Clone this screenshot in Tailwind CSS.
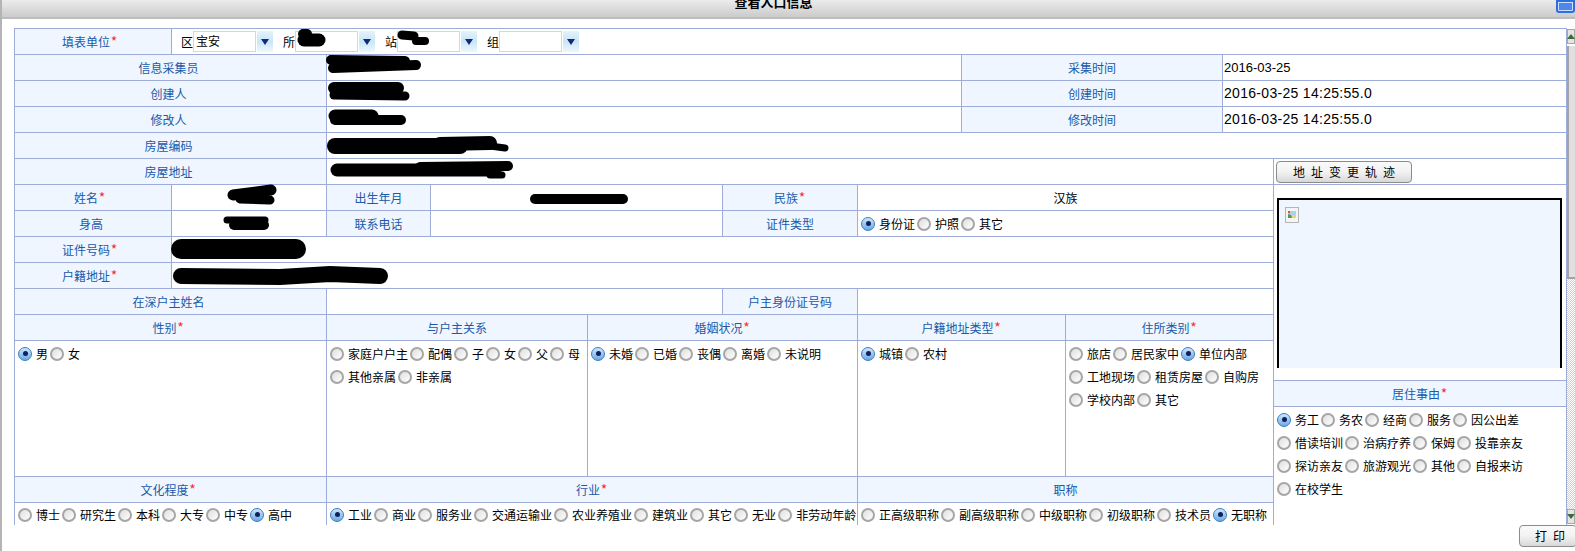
<!doctype html>
<html>

<head>
  <meta charset="UTF-8">
  <title>查看人口信息</title>
  <script src="https://cdn.jsdelivr.net/npm/@tailwindcss/browser@4"></script>
</head>

<body class="relative h-[551px] overflow-hidden bg-white text-xs text-black font-['Noto_Sans_CJK_SC','Noto_Sans_CJK_TC',sans-serif]">

  <!-- title bar -->
  <div class="relative h-[19px] ml-[2px] overflow-hidden border-b-2 border-[#bcbcbc] bg-gradient-to-b from-[#ececec] to-[#cbcbcb]">
    <p class="-mt-[5px] text-center text-[13px] leading-[14px] font-bold pr-[30px]">查看人口信息</p>
    <div class="absolute right-0 top-0 w-[19px] h-[13px] border-2 border-[#2b6fdc] rounded-b-[3px] bg-[#4d86ef] shadow-[inset_0_0_0_1px_#cfe0ff]"></div>
  </div>

  <!-- page edge on the left -->
  <div class="absolute left-0 top-0 w-[2px] h-full bg-[#b4b4b4]"></div>

  <div class="flex pt-[9px] pl-[14px]">
    <div class="w-[1553px] h-[497px] overflow-hidden">
      <table class="table-fixed w-[1552px] [&_td]:border [&_td]:border-[#9dacd8]">
        <colgroup>
          <col class="w-[157px]"><col class="w-[155px]"><col class="w-[104px]"><col class="w-[157px]"><col class="w-[135px]"><col class="w-[135px]"><col class="w-[104px]"><col class="w-[104px]"><col class="w-[157px]"><col class="w-[51px]"><col class="w-[293px]">
        </colgroup>
        <tr class="h-[26px]">
          <td class="bg-[#eff6ff] text-[#2059a8] text-center pr-[6px]">填表单位<span class="inline-block w-[8px] text-[14px] leading-none text-red-500">*</span></td>
          <td colspan="10">
            <div class="flex pl-[9px] gap-[10px] items-center">
              <div class="flex items-center">
                <span class="w-3">区</span>
                <span class="w-[63px] h-[21px] border border-[#c6dcec] pl-[2px] leading-[17px]">宝安</span>
                <span class="flex justify-center items-center w-[16px] h-[21px] ml-px bg-gradient-to-b from-[#e4f2fb] via-[#c8e6f8] to-[#eef8fd]"><span class="w-0 h-0 border-x-[4px] border-x-transparent border-t-[6px] border-t-[#0f2a80]"></span></span>
              </div>
              <div class="flex items-center">
                <span class="w-3">所</span>
                <span class="w-[63px] h-[21px] border border-[#c6dcec]"></span>
                <span class="flex justify-center items-center w-[16px] h-[21px] ml-px bg-gradient-to-b from-[#e4f2fb] via-[#c8e6f8] to-[#eef8fd]"><span class="w-0 h-0 border-x-[4px] border-x-transparent border-t-[6px] border-t-[#0f2a80]"></span></span>
              </div>
              <div class="flex items-center">
                <span class="w-3">站</span>
                <span class="w-[63px] h-[21px] border border-[#c6dcec]"></span>
                <span class="flex justify-center items-center w-[16px] h-[21px] ml-px bg-gradient-to-b from-[#e4f2fb] via-[#c8e6f8] to-[#eef8fd]"><span class="w-0 h-0 border-x-[4px] border-x-transparent border-t-[6px] border-t-[#0f2a80]"></span></span>
              </div>
              <div class="flex items-center">
                <span class="w-3">组</span>
                <span class="w-[63px] h-[21px] border border-[#c6dcec]"></span>
                <span class="flex justify-center items-center w-[16px] h-[21px] ml-px bg-gradient-to-b from-[#e4f2fb] via-[#c8e6f8] to-[#eef8fd]"><span class="w-0 h-0 border-x-[4px] border-x-transparent border-t-[6px] border-t-[#0f2a80]"></span></span>
              </div>
            </div>
          </td>
        </tr>
        <tr class="h-[26px]">
          <td colspan="2" class="bg-[#eff6ff] text-[#2059a8] text-center pr-[4px]">信息采集员</td>
          <td colspan="5"></td>
          <td colspan="2" class="bg-[#eff6ff] text-[#2059a8] text-center">采集时间</td>
          <td colspan="2" class="pl-[1px] font-['Liberation_Sans',sans-serif] text-[13px]">2016-03-25</td>
        </tr>
        <tr class="h-[26px]">
          <td colspan="2" class="bg-[#eff6ff] text-[#2059a8] text-center pr-[4px]">创建人</td>
          <td colspan="5"></td>
          <td colspan="2" class="bg-[#eff6ff] text-[#2059a8] text-center">创建时间</td>
          <td colspan="2" class="pl-[1px] font-['Liberation_Sans',sans-serif] text-[14px] tracking-[0.3px]">2016-03-25 14:25:55.0</td>
        </tr>
        <tr class="h-[26px]">
          <td colspan="2" class="bg-[#eff6ff] text-[#2059a8] text-center pr-[4px]">修改人</td>
          <td colspan="5"></td>
          <td colspan="2" class="bg-[#eff6ff] text-[#2059a8] text-center">修改时间</td>
          <td colspan="2" class="pl-[1px] font-['Liberation_Sans',sans-serif] text-[14px] tracking-[0.3px]">2016-03-25 14:25:55.0</td>
        </tr>
        <tr class="h-[26px]">
          <td colspan="2" class="bg-[#eff6ff] text-[#2059a8] text-center pr-[4px]">房屋编码</td>
          <td colspan="9"></td>
        </tr>
        <tr class="h-[26px]">
          <td colspan="2" class="bg-[#eff6ff] text-[#2059a8] text-center pr-[4px]">房屋地址</td>
          <td colspan="8"></td>
          <td class="pl-[2px]">
            <button class="block w-[136px] h-[22px] border border-[#8c8c8c] rounded-[4px] bg-gradient-to-b from-[#fafafa] via-[#f2f2f2] to-[#d8d8d8] leading-[20px] text-center [word-spacing:3.3px]">地 址 变 更 轨 迹</button>
          </td>
        </tr>
        <tr class="h-[26px]">
          <td class="bg-[#eff6ff] text-[#2059a8] text-center pr-[6px]">姓名<span class="inline-block w-[8px] text-[14px] leading-none text-red-500">*</span></td>
          <td></td>
          <td class="bg-[#eff6ff] text-[#2059a8] text-center">出生年月</td>
          <td colspan="2"></td>
          <td class="bg-[#eff6ff] text-[#2059a8] text-center">民族<span class="inline-block w-[8px] text-[14px] leading-none text-red-500">*</span></td>
          <td colspan="4" class="text-center">汉族</td>
          <td rowspan="7" class="align-top pt-[13px] pl-[3px]">
            <div class="w-[285px] h-[170px] border-2 border-b-0 border-black bg-[#eff6ff] pt-[7px] pl-[6px]">
              <svg width="14" height="16" viewBox="0 0 14 16" class="block">
                <rect x="0.5" y="0.5" width="13" height="15" fill="#f4f4f4" stroke="#b5b5b5"/>
                <rect x="3" y="4" width="8" height="7" fill="#a8d0f0"/>
                <path d="M3 11 L3 7 L6 8 L7 11 Z" fill="#4f9a4f"/>
                <rect x="7" y="8" width="4" height="3" fill="#f0d070"/>
                <rect x="3" y="4" width="2" height="2" fill="#d9582e"/>
              </svg>
            </div>
          </td>
        </tr>
        <tr class="h-[26px]">
          <td class="bg-[#eff6ff] text-[#2059a8] text-center pr-[4px]">身高</td>
          <td></td>
          <td class="bg-[#eff6ff] text-[#2059a8] text-center">联系电话</td>
          <td colspan="2"></td>
          <td class="bg-[#eff6ff] text-[#2059a8] text-center">证件类型</td>
          <td colspan="4" class="px-[3px]"><div data-opts="身份证*,护照,其它" class="flex"></div></td>
        </tr>
        <tr class="h-[26px]">
          <td class="bg-[#eff6ff] text-[#2059a8] text-center pr-[6px]">证件号码<span class="inline-block w-[8px] text-[14px] leading-none text-red-500">*</span></td>
          <td colspan="9"></td>
        </tr>
        <tr class="h-[26px]">
          <td class="bg-[#eff6ff] text-[#2059a8] text-center pr-[6px]">户籍地址<span class="inline-block w-[8px] text-[14px] leading-none text-red-500">*</span></td>
          <td colspan="9"></td>
        </tr>
        <tr class="h-[26px]">
          <td colspan="2" class="bg-[#eff6ff] text-[#2059a8] text-center pr-[4px]">在深户主姓名</td>
          <td colspan="3"></td>
          <td class="bg-[#eff6ff] text-[#2059a8] text-center">户主身份证号码</td>
          <td colspan="4"></td>
        </tr>
        <tr class="h-[26px]">
          <td colspan="2" class="bg-[#eff6ff] text-[#2059a8] text-center pr-[4px]">性别<span class="inline-block w-[8px] text-[14px] leading-none text-red-500">*</span></td>
          <td colspan="2" class="bg-[#eff6ff] text-[#2059a8] text-center">与户主关系</td>
          <td colspan="2" class="bg-[#eff6ff] text-[#2059a8] text-center">婚姻状况<span class="inline-block w-[8px] text-[14px] leading-none text-red-500">*</span></td>
          <td colspan="2" class="bg-[#eff6ff] text-[#2059a8] text-center">户籍地址类型<span class="inline-block w-[8px] text-[14px] leading-none text-red-500">*</span></td>
          <td colspan="2" class="bg-[#eff6ff] text-[#2059a8] text-center">住所类别<span class="inline-block w-[8px] text-[14px] leading-none text-red-500">*</span></td>
        </tr>
        <tr class="h-[40px]">
          <td rowspan="3" colspan="2" class="align-top px-[3px] pt-[1px]"><div data-opts="男*,女" class="flex flex-wrap"></div></td>
          <td rowspan="3" colspan="2" class="align-top px-[3px] pt-[1px]"><div data-opts="家庭户户主,配偶,子,女,父,母,其他亲属,非亲属" class="flex flex-wrap"></div></td>
          <td rowspan="3" colspan="2" class="align-top px-[3px] pt-[1px]"><div data-opts="未婚*,已婚,丧偶,离婚,未说明" class="flex flex-wrap"></div></td>
          <td rowspan="3" colspan="2" class="align-top px-[3px] pt-[1px]"><div data-opts="城镇*,农村" class="flex flex-wrap"></div></td>
          <td rowspan="3" colspan="2" class="align-top px-[3px] pt-[1px]"><div data-opts="旅店,居民家中,单位内部*,工地现场,租赁房屋,自购房,学校内部,其它" class="flex flex-wrap"></div></td>
        </tr>
        <tr class="h-[26px]">
          <td class="bg-[#eff6ff] text-[#2059a8] text-center">居住事由<span class="inline-block w-[8px] text-[14px] leading-none text-red-500">*</span></td>
        </tr>
        <tr class="h-[70px]">
          <td rowspan="3" class="align-top px-[3px] pt-[1px]"><div data-opts="务工*,务农,经商,服务,因公出差,借读培训,治病疗养,保姆,投靠亲友,探访亲友,旅游观光,其他,自报来访,在校学生" class="flex flex-wrap"></div></td>
        </tr>
        <tr class="h-[26px]">
          <td colspan="2" class="bg-[#eff6ff] text-[#2059a8] text-center pr-[4px]">文化程度<span class="inline-block w-[8px] text-[14px] leading-none text-red-500">*</span></td>
          <td colspan="4" class="bg-[#eff6ff] text-[#2059a8] text-center">行业<span class="inline-block w-[8px] text-[14px] leading-none text-red-500">*</span></td>
          <td colspan="4" class="bg-[#eff6ff] text-[#2059a8] text-center">职称</td>
        </tr>
        <tr class="h-[26px]">
          <td colspan="2" class="align-top px-[3px]"><div data-opts="博士,研究生,本科,大专,中专,高中*" class="flex"></div></td>
          <td colspan="4" class="align-top px-[3px]"><div data-opts="工业*,商业,服务业,交通运输业,农业养殖业,建筑业,其它,无业,非劳动年龄" class="flex"></div></td>
          <td colspan="4" class="align-top px-[3px]"><div data-opts="正高级职称,副高级职称,中级职称,初级职称,技术员,无职称*" class="flex"></div></td>
        </tr>
      </table>
    </div>

    <!-- scrollbar, cut off by the window edge -->
    <div class="w-[8px] h-[495px] mt-px flex flex-col overflow-hidden">
      <div class="flex justify-center items-center h-[15px] border border-[#a8a8a8] bg-[#e4e4e4]"><span class="w-0 h-0 border-x-[4px] border-x-transparent border-b-[5px] border-b-[#3c6b3c]"></span></div>
      <div class="h-[233px] mt-[2px] border-l-2 border-b-2 border-[#a4a4a8] bg-[#e0e0e0]"></div>
      <div class="flex-1 bg-[repeating-conic-gradient(#d0d0d0_0_25%,#ffffff_0_50%)] bg-[length:2px_2px]"></div>
      <div class="flex justify-center items-center h-[15px] border border-[#a8a8a8] bg-[#e4e4e4]"><span class="w-0 h-0 border-x-[4px] border-x-transparent border-t-[5px] border-t-[#3c6b3c]"></span></div>
    </div>
  </div>

  <div class="flex justify-end">
    <button class="w-[58px] h-[22px] -mr-[2px] pl-[4px] border border-[#8c8c8c] rounded-[4px] bg-gradient-to-b from-[#fafafa] via-[#f2f2f2] to-[#d8d8d8] leading-[20px] text-center [word-spacing:3.3px]">打 印</button>
  </div>

  <!-- scribbled-out personal data lying over the table -->
  <svg class="absolute left-0 top-0 pointer-events-none" width="1575" height="551" fill="none" stroke="#000" stroke-linecap="round">
    <path stroke-width="10" d="M303 34 L307 34"/>
    <path stroke-width="13" d="M304 40 L319 40"/>
    <path stroke-width="9" d="M402 35 L414 36"/>
    <path stroke-width="8" d="M416 41 L425 41"/>
    <path stroke-width="10" d="M331 60 L405 61"/>
    <path stroke-width="10" d="M333 68 L416 65"/>
    <path stroke-width="12" d="M334 88 L398 88"/>
    <path stroke-width="9" d="M334 95 L405 96"/>
    <path stroke-width="13" d="M335 116 L372 116"/>
    <path stroke-width="10" d="M335 120 L401 120"/>
    <path stroke-width="16" d="M335 146 L460 146"/>
    <path stroke-width="14" d="M440 144 L490 143"/>
    <path stroke-width="7" d="M490 146 L505 148"/>
    <path stroke-width="13" d="M337 170 L495 170"/>
    <path stroke-width="10" d="M420 167 L508 166"/>
    <path stroke-width="7" d="M490 175 L502 175"/>
    <path stroke-width="11" d="M233 195 L271 190"/>
    <path stroke-width="9" d="M240 199 L270 200"/>
    <path stroke-width="7" d="M227 220 L265 220"/>
    <path stroke-width="10" d="M234 225 L264 225"/>
    <path stroke-width="20" d="M181 249 L296 249"/>
    <path stroke-width="16" d="M181 276 L280 277 L330 274 L380 276"/>
    <path stroke-width="10" d="M535 199 L623 199"/>
  </svg>

  <script>
    // radio lists, a trailing * marks the checked option
    document.querySelectorAll("[data-opts]").forEach((box) => {
      box.innerHTML = box.dataset.opts.split(",").map((opt) => {
        const checked = opt.endsWith("*");
        const dot = checked
          ? '<span class="flex justify-center items-center w-[14px] h-[14px] rounded-full border border-[#3f7fc0] bg-gradient-to-b from-[#cfe6fa] to-[#6aa9e6]"><span class="w-[5px] h-[5px] rounded-full bg-[#10205a]"></span></span>'
          : '<span class="w-[14px] h-[14px] rounded-full border-2 border-[#a6a6a6] bg-gradient-to-br from-[#dedede] to-[#ffffff]"></span>';
        return `<label class="flex items-center h-[23px] whitespace-nowrap mr-[2px]">${dot}<span class="ml-[4px]">${opt.replace("*", "")}</span></label>`;
      }).join("");
    });
  </script>
</body>

</html>
